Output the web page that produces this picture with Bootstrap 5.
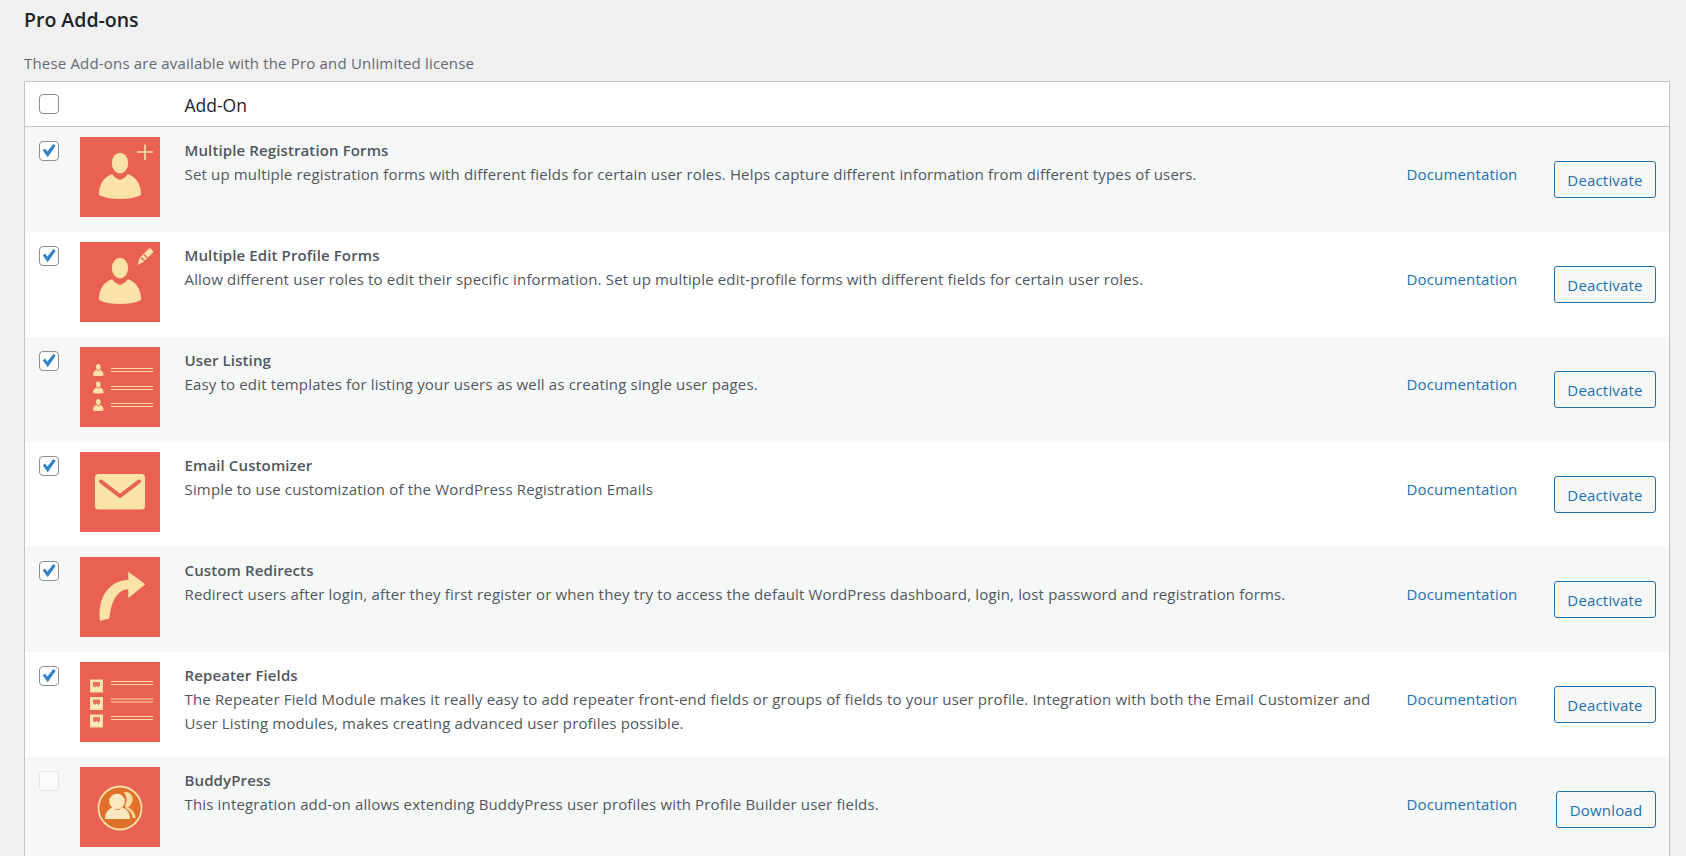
<!doctype html>
<html lang="en">
<head>
<meta charset="utf-8">
<title>Pro Add-ons</title>
<link href="https://cdn.jsdelivr.net/npm/bootstrap@5.3.0/dist/css/bootstrap.min.css" rel="stylesheet">
<style>
html,body{height:856px;overflow:hidden}
body{background:#f0f0f1;font-family:"Open Sans","Noto Sans",sans-serif;font-size:15px;letter-spacing:.16px;line-height:24.5px;color:#50575e}
.page-wrap{padding:0 16px 0 24px}
.page-title{font-size:19.500px;font-weight:600;letter-spacing:0;line-height:24px;color:#1d2327;margin:8px 0 0;}
.page-sub{color:#646970;line-height:24px;margin:19px 0 6px;letter-spacing:.18px}
.addons{table-layout:fixed;width:1646px;border:1px solid #c3c4c7;margin:0;background:#fff;--bs-table-bg:transparent;--bs-table-color:#50575e;color:#50575e}
.addons th,.addons td{padding:0;border:0;vertical-align:top;background:transparent;box-shadow:none}
.addons thead th{height:45px;background:#fff;border-bottom:1px solid #c3c4c7;font-weight:400;font-size:17.500px;letter-spacing:0;color:#1d2327;padding-top:11px}
.addons thead .chk-cell{padding-top:12px}
.addons tbody tr{height:105px}
.addons tbody tr:nth-child(odd) td{background:#f6f7f7}
.addons tbody tr:nth-child(even) td{background:#fff}
.chk-cell{padding-left:14px!important}
.addons tbody .chk-cell{padding-top:14px}
.addons .form-check-input{width:20px;height:20px;margin:0;display:block;border:1px solid #8c8f94;border-radius:4px;background-color:#fff;box-shadow:none;opacity:1}
.addons .form-check-input:checked{background-color:#fff;border-color:#8c8f94;background-image:url("data:image/svg+xml,%3Csvg xmlns='http://www.w3.org/2000/svg' viewBox='0 0 20 20'%3E%3Cpath d='M3.800 9.600l2.100-2 2.400 3L14.400 3l2.300 1.700L8.700 16.200z' fill='%233582c4'/%3E%3C/svg%3E");background-size:20px 20px}
.addons .form-check-input:disabled{background-color:rgba(255,255,255,.5);border-color:rgba(220,220,222,.75)}
.icon-cell{padding-top:10px!important}
.addon-ico{display:block;width:80px;height:80px}
.desc-cell{padding-top:11px!important}
.addon-name{font-weight:600;font-size:15px;letter-spacing:.12px;color:#50575e;line-height:24px;margin-bottom:0}
.addon-text{margin:0}
.doc-cell{padding-top:35px!important}
.doc-cell a{color:#2271b1;text-decoration:none}
.btn-cell{padding-top:34px!important;padding-right:13px!important;text-align:right}
.wp-btn{--bs-btn-color:#2271b1;--bs-btn-border-color:#2271b1;--bs-btn-bg:#f6f7f7;--bs-btn-hover-bg:#f6f7f7;--bs-btn-hover-color:#135e96;--bs-btn-hover-border-color:#135e96;--bs-btn-border-radius:3px;--bs-btn-font-size:15px;--bs-btn-line-height:24px;--bs-btn-padding-x:0;--bs-btn-padding-y:6px;width:102px;height:37px;letter-spacing:.18px}
.wp-btn.dl{width:100px}
</style>
</head>
<body>
<div class="page-wrap">
  <h2 class="page-title">Pro Add-ons</h2>
  <p class="page-sub">These Add-ons are available with the Pro and Unlimited license</p>
  <table class="table addons">
    <colgroup><col style="width:55px"><col style="width:105px"><col style="width:1222px"><col style="width:127px"><col></colgroup>
    <thead>
      <tr><th class="chk-cell"><input class="form-check-input" type="checkbox" aria-label="Select all"></th><th></th><th>Add-On</th><th></th><th></th></tr>
    </thead>
    <tbody>
      <tr>
        <td class="chk-cell"><input class="form-check-input" type="checkbox" checked aria-label="Multiple Registration Forms"></td>
        <td class="icon-cell"><svg class="addon-ico" viewBox="0 0 80 80"><rect width="80" height="80" fill="#e96153"/><g fill="#fbe2a6"><ellipse cx="40" cy="26" rx="8.200" ry="10.300"/><path d="M19 58c0-9 3-17 13-21 2 3 5 5 8 6 3-1 6-3 8-6 10 4 13 12 13 21-6 3-14 4-21 4s-15-1-21-4z"/><path d="M64.200 7.500h1.600v6.700h7v1.600h-7v7.200h-1.600v-7.200h-7v-1.600h7z"/></g></svg></td>
        <td class="desc-cell"><p class="addon-name">Multiple Registration Forms</p><p class="addon-text">Set up multiple registration forms with different fields for certain user roles. Helps capture different information from different types of users.</p></td>
        <td class="doc-cell"><a href="#">Documentation</a></td>
        <td class="btn-cell"><button type="button" class="btn wp-btn">Deactivate</button></td>
      </tr>
      <tr>
        <td class="chk-cell"><input class="form-check-input" type="checkbox" checked aria-label="Multiple Edit Profile Forms"></td>
        <td class="icon-cell"><svg class="addon-ico" viewBox="0 0 80 80"><rect width="80" height="80" fill="#e96153"/><g fill="#fbe2a6"><ellipse cx="40" cy="26" rx="8.200" ry="10.300"/><path d="M19 58c0-9 3-17 13-21 2 3 5 5 8 6 3-1 6-3 8-6 10 4 13 12 13 21-6 3-14 4-21 4s-15-1-21-4z"/><path d="M57.500 23l2.500-7.500 9-9 1-.5 3.500 3.500-.5 1-9 9z"/></g><path d="M61 15.500l5 5M64 12.500l3.500 3.500" stroke="#e96153" stroke-width="1.100" fill="none"/></svg></td>
        <td class="desc-cell"><p class="addon-name">Multiple Edit Profile Forms</p><p class="addon-text">Allow different user roles to edit their specific information. Set up multiple edit-profile forms with different fields for certain user roles.</p></td>
        <td class="doc-cell"><a href="#">Documentation</a></td>
        <td class="btn-cell"><button type="button" class="btn wp-btn">Deactivate</button></td>
      </tr>
      <tr>
        <td class="chk-cell"><input class="form-check-input" type="checkbox" checked aria-label="User Listing"></td>
        <td class="icon-cell"><svg class="addon-ico" viewBox="0 0 80 80"><rect width="80" height="80" fill="#e96153"/><g fill="#fbe2a6"><ellipse cx="18.300" cy="20" rx="2.300" ry="3"/><path d="M13 28.500c0-3.500 1.500-5 3.800-5.500l1.500 1.200 1.500-1.200c2.300.5 3.800 2 3.800 5.500-3 .8-7.600.8-10.600 0z"/><ellipse cx="18.300" cy="37.500" rx="2.300" ry="3"/><path d="M13 46c0-3.500 1.500-5 3.800-5.500l1.500 1.200 1.500-1.200c2.300.5 3.800 2 3.800 5.500-3 .8-7.600.8-10.600 0z"/><ellipse cx="18.300" cy="55" rx="2.300" ry="3"/><path d="M13 63.500c0-3.500 1.500-5 3.800-5.500l1.500 1.200 1.500-1.200c2.300.5 3.800 2 3.800 5.500-3 .8-7.600.8-10.600 0z"/></g><path d="M31 21.500h42M31 24.500h42M31 39.500h42M31 42.500h42M31 56.500h42M31 59.500h42" stroke="#fbdca0" stroke-width="1"/></svg></td>
        <td class="desc-cell"><p class="addon-name">User Listing</p><p class="addon-text">Easy to edit templates for listing your users as well as creating single user pages.</p></td>
        <td class="doc-cell"><a href="#">Documentation</a></td>
        <td class="btn-cell"><button type="button" class="btn wp-btn">Deactivate</button></td>
      </tr>
      <tr>
        <td class="chk-cell"><input class="form-check-input" type="checkbox" checked aria-label="Email Customizer"></td>
        <td class="icon-cell"><svg class="addon-ico" viewBox="0 0 80 80"><rect width="80" height="80" fill="#e96153"/><rect x="15" y="22" width="50" height="35.500" rx="3.500" fill="#fbe2a6"/><path d="M21 29.500l19 14.500 19-14.500" fill="none" stroke="#e96153" stroke-width="4" stroke-linecap="round" stroke-linejoin="round"/></svg></td>
        <td class="desc-cell"><p class="addon-name">Email Customizer</p><p class="addon-text">Simple to use customization of the WordPress Registration Emails</p></td>
        <td class="doc-cell"><a href="#">Documentation</a></td>
        <td class="btn-cell"><button type="button" class="btn wp-btn">Deactivate</button></td>
      </tr>
      <tr>
        <td class="chk-cell"><input class="form-check-input" type="checkbox" checked aria-label="Custom Redirects"></td>
        <td class="icon-cell"><svg class="addon-ico" viewBox="0 0 80 80"><rect width="80" height="80" fill="#e96153"/><path d="M20 64C17 40 30 23 48.300 23v-8.300l17 12.600-17 14v-9C38 32.300 31 44 29.500 61.500z" fill="#fbe2a6"/></svg></td>
        <td class="desc-cell"><p class="addon-name">Custom Redirects</p><p class="addon-text">Redirect users after login, after they first register or when they try to access the default WordPress dashboard, login, lost password and registration forms.</p></td>
        <td class="doc-cell"><a href="#">Documentation</a></td>
        <td class="btn-cell"><button type="button" class="btn wp-btn">Deactivate</button></td>
      </tr>
      <tr>
        <td class="chk-cell"><input class="form-check-input" type="checkbox" checked aria-label="Repeater Fields"></td>
        <td class="icon-cell"><svg class="addon-ico" viewBox="0 0 80 80"><rect width="80" height="80" fill="#e96153"/><rect x="10" y="17.500" width="13" height="13" fill="#fbe2a6"/><rect x="11.800" y="19.300" width="9.400" height="9.400" fill="#fcebc0"/><path d="M13 20h7v4l-1.500 1.500-2-1.500-2 1.500-1.500-1.500z" fill="#e9705f"/><rect x="10" y="35" width="13" height="13" fill="#fbe2a6"/><rect x="11.800" y="36.800" width="9.400" height="9.400" fill="#fcebc0"/><path d="M13 37.500h7v4L18.500 43l-2-1.500-2 1.500-1.500-1.500z" fill="#e9705f"/><rect x="10" y="52.500" width="13" height="13" fill="#fbe2a6"/><rect x="11.800" y="54.300" width="9.400" height="9.400" fill="#fcebc0"/><path d="M13 55h7v4l-1.500 1.500-2-1.500-2 1.500L13 59z" fill="#e9705f"/><path d="M31 19.500h42M31 22.500h42M31 37h42M31 40h42M31 54.500h42M31 57.500h42" stroke="#fbdca0" stroke-width="1"/></svg></td>
        <td class="desc-cell"><p class="addon-name">Repeater Fields</p><p class="addon-text">The Repeater Field Module makes it really easy to add repeater front-end fields or groups of fields to your user profile. Integration with both the Email Customizer and User Listing modules, makes creating advanced user profiles possible.</p></td>
        <td class="doc-cell"><a href="#">Documentation</a></td>
        <td class="btn-cell"><button type="button" class="btn wp-btn">Deactivate</button></td>
      </tr>
      <tr>
        <td class="chk-cell"><input class="form-check-input" type="checkbox" disabled aria-label="BuddyPress"></td>
        <td class="icon-cell"><svg class="addon-ico" viewBox="0 0 80 80"><rect width="80" height="80" fill="#e96153"/><circle cx="40" cy="41" r="21.500" fill="#e0702a" stroke="#fbe2a6" stroke-width="1.800"/><path d="M44 25a7.500 7.500 0 0 1 7.500 11.500c-1 2-2.500 3.500-3.500 4 4 1.500 7 5 7.800 10.500h-3c-1-5-3.500-8-7-9.500l-1-3c2-3 3-8-1-13z" fill="#f8d9a0"/><circle cx="37" cy="34.500" r="7.800" fill="#fbe8c0"/><path d="M25 52c0-6 3-10 8-11.500 2 2 3.500 2.500 4.500 2.500s2.500-.5 4.500-2.500c5 1.500 8 5.500 8 11.500z" fill="#fbe8c0"/></svg></td>
        <td class="desc-cell"><p class="addon-name">BuddyPress</p><p class="addon-text">This integration add-on allows extending BuddyPress user profiles with Profile Builder user fields.</p></td>
        <td class="doc-cell"><a href="#">Documentation</a></td>
        <td class="btn-cell"><button type="button" class="btn wp-btn dl">Download</button></td>
      </tr>
    </tbody>
  </table>
</div>
</body>
</html>
